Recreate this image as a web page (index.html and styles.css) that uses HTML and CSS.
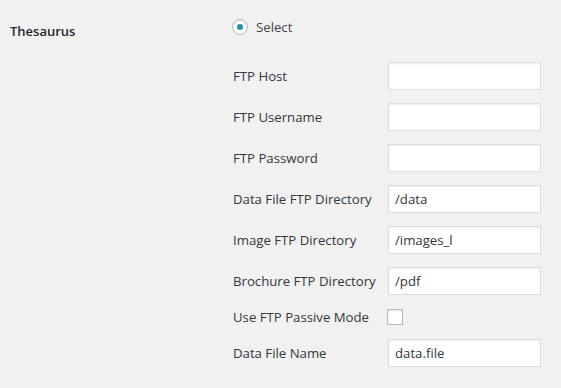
FILE: index.html
```html
<!DOCTYPE html>
<html lang="en">
<head>
  <meta charset="UTF-8" />
  <title>Thesaurus settings</title>
  <link rel="stylesheet" href="styles.css">
</head>
<body>
  <div class="form-row">
    <div class="row-title">Thesaurus</div>
    <div class="row-body">
      <label class="radio-line">
        <span class="radio checked"></span>
        <span>Select</span>
      </label>

      <div class="ftp-grid">
        <div class="field">
          <span class="field-label">FTP Host</span>
          <span class="text-input"></span>
        </div>
        <div class="field">
          <span class="field-label">FTP Username</span>
          <span class="text-input"></span>
        </div>
        <div class="field">
          <span class="field-label">FTP Password</span>
          <span class="text-input"></span>
        </div>
        <div class="field">
          <span class="field-label">Data File FTP Directory</span>
          <span class="text-input">/data</span>
        </div>
        <div class="field">
          <span class="field-label">Image FTP Directory</span>
          <span class="text-input">/images_l</span>
        </div>
        <div class="field">
          <span class="field-label">Brochure FTP Directory</span>
          <span class="text-input">/pdf</span>
        </div>
        <div class="field field-check">
          <span class="field-label">Use FTP Passive Mode</span>
          <span class="checkbox"></span>
        </div>
        <div class="field">
          <span class="field-label">Data File Name</span>
          <span class="text-input">data.file</span>
        </div>
      </div>
    </div>
  </div>
</body>
</html>
```

FILE: styles.css
```css
body {
  margin: 0;
  background: #f1f1f1;
  font-family: "Open Sans", "Noto Sans", sans-serif;
  font-size: 13.2px;
  color: #444;
}

.form-row {
  display: flex;
  padding-top: 19px;
}

.row-title {
  width: 222px;
  padding-left: 10px;
  padding-top: 3px;
  font-weight: 600;
  font-size: 13px;
  color: #23282d;
  line-height: 18px;
}

.row-body {
  display: flex;
  flex-direction: column;
}

.radio-line {
  display: flex;
  align-items: center;
  gap: 8px;
  height: 16px;
  color: #444;
}

.radio {
  width: 14px; height: 14px;
  border: 1px solid #b4b9be;
  border-radius: 50%;
  background: #fff;
  box-shadow: inset 0 1px 2px rgba(0,0,0,0.1);
  display: flex; align-items: center; justify-content: center;
}
.radio.checked::before {
  content: "";
  width: 6px; height: 6px;
  border-radius: 50%;
  background: #1e8cbe;
}

.ftp-grid {
  display: flex;
  flex-direction: column;
  gap: 13px;
  margin-top: 27px;
  padding-left: 1px;
}

.field {
  display: flex;
  align-items: center;
  height: 28px;
}
.field-check { height: 18px; }

.field-label {
  width: 155px;
  margin-top: -1px;
  color: #32373c;
}

.text-input {
  box-sizing: border-box;
  width: 153px; height: 28px;
  background: #fff;
  border: 1px solid #ddd;
  box-shadow: inset 0 1px 2px rgba(0,0,0,0.07);
  padding: 0 6px;
  line-height: 26px;
  color: #32373c;
}

.checkbox {
  box-sizing: border-box;
  width: 16px; height: 16px;
  margin-left: -1px;
  background: #fff;
  border: 1px solid #b4b9be;
  box-shadow: inset 0 1px 2px rgba(0,0,0,0.1);
}
```
